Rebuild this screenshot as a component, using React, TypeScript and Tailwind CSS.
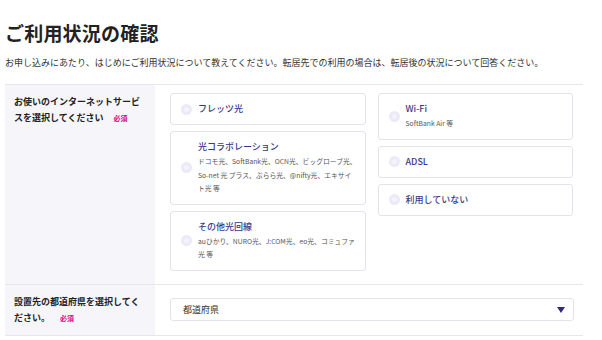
import React from "react";

type Option = {
  label: string;
  note?: string[];
};

const leftOptions: Option[] = [
  { label: "フレッツ光" },
  {
    label: "光コラボレーション",
    note: [
      "ドコモ光、SoftBank光、OCN光、ビッグローブ光、",
      "So-net 光 プラス、ぷらら光、@nifty光、エキサイ",
      "ト光 等",
    ],
  },
  {
    label: "その他光回線",
    note: ["auひかり、NURO光、J:COM光、eo光、コミュファ", "光 等"],
  },
];

const rightOptions: Option[] = [
  { label: "Wi-Fi", note: ["SoftBank Air 等"] },
  { label: "ADSL" },
  { label: "利用していない" },
];

function FieldLabel({ first, second }: { first: string; second: string }) {
  return (
    <div className="flex flex-col text-[9px] font-bold leading-[16px]">
      <span className="whitespace-nowrap">{first}</span>
      <span className="flex items-center whitespace-nowrap">
        <span>{second}</span>
        <span className="ml-[10px] text-[7px] font-bold leading-[10px] text-[#e4007f]">
          必須
        </span>
      </span>
    </div>
  );
}

function OptionCard({ opt }: { opt: Option }) {
  let size = "h-[32px]";
  if (opt.note && opt.note.length === 1) size = "min-h-[46px] py-[8px]";
  else if (opt.note) size = "py-[8px]";

  return (
    <label
      className={`flex items-center gap-[6px] rounded-[3px] border border-[#e3e3ea] bg-white pl-[10px] pr-[6px] ${size}`}
    >
      <span className="flex h-[11px] w-[11px] shrink-0 items-center justify-center rounded-full bg-[#ebeaf8]">
        <span className="h-[5px] w-[5px] rounded-full bg-[#f4f3fc]" />
      </span>
      <span className="flex flex-col">
        <span className="text-[9px] font-medium leading-[14px] text-[#3a388a]">
          {opt.label}
        </span>
        {opt.note && (
          <span className="mt-[1px] flex flex-col text-[6.8px] leading-[13.5px] text-[#555]">
            {opt.note.map((line) => (
              <span key={line} className="whitespace-nowrap">
                {line}
              </span>
            ))}
          </span>
        )}
      </span>
    </label>
  );
}

export default function App() {
  return (
    <div
      className="h-[340px] w-[602px] bg-white px-[5px] pt-[20px] text-[#222]"
      style={{ fontFamily: '"Noto Sans CJK JP", "Noto Sans", sans-serif' }}
    >
      <h1 className="text-[19px] font-bold leading-[26px] tracking-[0.2px]">
        ご利用状況の確認
      </h1>
      <p className="mt-[10px] text-[9px] leading-[14px] text-[#333]">
        お申し込みにあたり、はじめにご利用状況について教えてください。転居先での利用の場合は、転居後の状況について回答ください。
      </p>

      <div className="mt-[14px] w-[578px] border-t border-[#e6e6ee]">
        <div className="flex border-b border-[#e6e6ee]">
          <div className="w-[150px] shrink-0 bg-[#f6f6fa] px-[9px] pt-[9px]">
            <FieldLabel
              first="お使いのインターネットサービ"
              second="スを選択してください"
            />
          </div>
          <div className="grid flex-1 grid-cols-2 items-start gap-x-[12px] pb-[13px] pl-[15px] pr-[10px] pt-[8px]">
            <div className="flex flex-col gap-[6px]">
              {leftOptions.map((o) => (
                <OptionCard key={o.label} opt={o} />
              ))}
            </div>
            <div className="flex flex-col gap-[6px]">
              {rightOptions.map((o) => (
                <OptionCard key={o.label} opt={o} />
              ))}
            </div>
          </div>
        </div>

        <div className="flex border-b border-[#e6e6ee]">
          <div className="w-[150px] shrink-0 bg-[#f6f6fa] px-[9px] py-[9px]">
            <FieldLabel first="設置先の都道府県を選択してく" second="ださい。" />
          </div>
          <div className="flex flex-1 items-center pl-[15px] pr-[9px]">
            <div className="flex h-[23px] w-full items-center justify-between rounded-[3px] border border-[#e3e3ea] bg-white pl-[12px] pr-[8px]">
              <span className="text-[9px] text-[#333]">都道府県</span>
              <svg width="8" height="6" viewBox="0 0 8 6">
                <path d="M0 0h8L4 6z" fill="#2e2b7c" />
              </svg>
            </div>
          </div>
        </div>
      </div>
    </div>
  );
}
